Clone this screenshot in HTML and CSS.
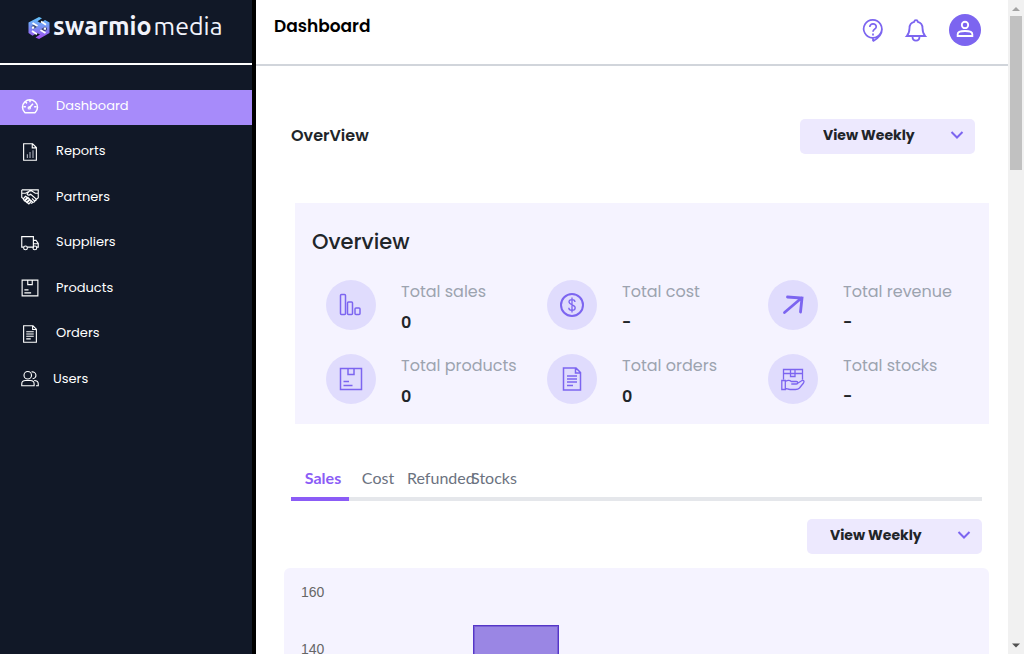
FILE: index.html
```html
<!DOCTYPE html>
<html lang="en">
<head>
<meta charset="utf-8">
<meta name="viewport" content="width=device-width, initial-scale=1">
<title>Dashboard</title>
<link rel="stylesheet" href="styles.css">
</head>
<body>
<svg class="defs" aria-hidden="true">
  <symbol id="i-box" viewBox="0 0 24 24"><path d="M1.500 1.500h21v21h-21zM9 1.500v6h6v-6M4.500 14.500h5.500M4.500 18.500h9"/></symbol>
  <symbol id="i-doc" viewBox="0 0 24 24"><path d="M3.500 1h12.500l4.500 4.500V23h-17zM15.500 1v5h5M7 9h10M7 12h10M7 15h10M7 18.500h6"/></symbol>
  <symbol id="i-chevron" viewBox="0 0 14 10"><path d="M1.500 2l5.500 5.500L12.500 2"/></symbol>
</svg>
<div class="app">
  <aside class="sidebar">
    <a class="logo" href="#">
      <svg class="logo-mark" viewBox="0 0 22 22" aria-hidden="true">
        <defs><linearGradient id="g" x1="0" y1="0" x2="0" y2="1"><stop offset="0" stop-color="#63c5fb"/><stop offset=".5" stop-color="#7b8cf5"/><stop offset="1" stop-color="#a34cf0"/></linearGradient></defs>
        <path fill="url(#g)" d="M11 0l3 1.300-4.500 3 3 1.700L17 3l4.500 2.500V16L11 22l-3.500-1.500 4.500-3-3-1.500-4.500 2.700L.5 16V5.500z"/>
        <path fill="#111827" d="M3.500 9l3-1.500 3 2-4.500 3zM12.500 12.500l4.500-3 2 1.500v2l-3 1.500z" opacity=".6"/>
        <path fill="none" stroke="#fff" stroke-width="1.800" d="M4.500 6l5 3M13 4.500l5 3.300M4 14l5 3.300M12.500 13l5 3"/>
        <path fill="#fff" d="M4 9.500h2.200v2.200H4zM15.800 10.500H18v2.200h-2.200z"/>
      </svg>
      <span class="logo-text"><b>swarmio</b><span>media</span></span>
    </a>
    <nav class="nav" aria-label="Main">
      <a class="nav-item active" href="#"><svg viewBox="0 0 24 24"><path stroke-width="2" d="M5 20.500a10 9.800 0 1 1 14 0 2 1 0 0 1-1.500.5h-11a2 1 0 0 1-1.500-.5zM11 14.500l5-5.500M12 4v3M6 6.500l2 2M3.500 13h3M17.500 13h3"/><circle cx="11" cy="14.500" r="1.500"/></svg><span>Dashboard</span></a>
      <a class="nav-item" href="#"><svg viewBox="0 0 24 24"><path d="M3.500 1h12l5 5v17h-17zM15 1v5.500h5.500"/><path class="dim" d="M8.500 20v-5M12 20v-8M16 20v-10.500"/></svg><span>Reports</span></a>
      <a class="nav-item" href="#"><svg viewBox="0 0 24 24"><path d="M1 2.500h22v10.500l-4 3.500M1 2.500v10l2.500 2M1 7h5l4.500-2.500M23 7h-4l-4.500-3h-3L8 8c1 2 3 2 5 .3l7 6.200c1 1.500-.5 3-2 2M14.500 14l3.500 3c.5 1.500-1 2.700-2.500 1.500L13 16.500M15.500 18.500c0 1.500-1.500 2-2.500 1.500"/><path stroke-width="1.700" d="M3 14.500l3-3.500 2.500 1.500-4 4.500zM5.500 17l4-4 2 2-4 4zM8.500 19.500l3.500-4 1.700 2-3.200 3.700z"/></svg><span>Partners</span></a>
      <a class="nav-item" href="#"><svg viewBox="0 0 24 24"><path d="M3.500 17.500H1v-14h15.500v14H8.500M16.500 8.500H20l3 4v5h-2M16.500 13H23"/><circle cx="6" cy="18.500" r="2.500"/><circle cx="18.500" cy="18.500" r="2.500"/></svg><span>Suppliers</span></a>
      <a class="nav-item" href="#"><svg><use href="#i-box"/></svg><span>Products</span></a>
      <a class="nav-item" href="#"><svg><use href="#i-doc"/></svg><span>Orders</span></a>
      <a class="nav-item users" href="#"><svg viewBox="0 0 24 24"><circle cx="9" cy="7" r="5"/><path d="M14 2.700a4.600 4.600 0 1 1 1.500 9M1 21v-2.500c0-3 2.500-4.500 5-4.500h6.500c2.500 0 5 1.500 5 4.500V21zM17.500 14c3 0 5.500 1.500 5.500 4.500V21h-3"/></svg><span>Users</span></a>
    </nav>
  </aside>

  <main class="main">
    <header class="topbar">
      <h1>Dashboard</h1>
      <div class="actions">
        <button class="icon-btn" type="button" aria-label="Help"><svg viewBox="0 0 24 24"><path stroke-width="1.700" d="M12 23.200v-3.400h-.5a9 9 0 1 1 .5 0M12 23.200c5-2.700 9-6.700 9-12.200M8.800 9c0-4.500 6.700-4 6.400 0-.2 2.200-3.200 2.300-3.200 4.800M12 15.400v2"/></svg></button>
        <button class="icon-btn" type="button" aria-label="Notifications"><svg viewBox="0 0 24 24"><path stroke-width="1.800" d="M2.800 18c2.700-3 2.700-5 2.700-8 0-3.500 2-5.500 4.700-6.200.2-2.200 3.400-2.200 3.600 0 2.700.7 4.700 2.700 4.700 6.200 0 3 0 5 2.700 8zM8.500 18.500c0 5.500 7 5.500 7 0"/></svg></button>
        <button class="avatar" type="button" aria-label="Account"><svg viewBox="0 0 24 24"><circle cx="12" cy="6.500" r="3.500"/><path d="M4 18.500v-2c0-4.500 16-4.500 16 0v2z"/></svg></button>
      </div>
    </header>

    <div class="content">
      <div class="section-head">
        <h2>OverView</h2>
        <div class="picker">
          <select aria-label="Overview period"><option>View Weekly</option><option>View Monthly</option></select>
          <svg><use href="#i-chevron"/></svg>
        </div>
      </div>

      <section class="panel">
        <h3>Overview</h3>
        <div class="stats">
          <div class="stat"><span class="badge"><svg viewBox="0 0 24 24"><rect x="1.500" y="1.500" width="5" height="20" rx="1"/><rect x="8.500" y="9" width="5" height="12.500" rx="1"/><rect x="16" y="15" width="5" height="6.500" rx="1"/></svg></span><div><p>Total sales</p><strong>0</strong></div></div>
          <div class="stat"><span class="badge"><svg viewBox="0 0 24 24"><circle cx="12" cy="12" r="11" stroke-width="2"/><path stroke-width="1.300" d="M15 9c0-3-6-3.300-6-.2 0 3.400 6.200 2.700 6.200 6 0 3.400-6.400 3.400-6.400 0M12 4.500v15"/></svg></span><div><p>Total cost</p><strong>-</strong></div></div>
          <div class="stat"><span class="badge"><svg viewBox="0 0 24 24"><path stroke-width="2.800" stroke-linecap="round" d="M3.500 19.500L20.500 5M6.500 4l14.500 1-1.500 14"/></svg></span><div><p>Total revenue</p><strong>-</strong></div></div>
          <div class="stat"><span class="badge"><svg><use href="#i-box"/></svg></span><div><p>Total products</p><strong>0</strong></div></div>
          <div class="stat"><span class="badge"><svg><use href="#i-doc"/></svg></span><div><p>Total orders</p><strong>0</strong></div></div>
          <div class="stat"><span class="badge"><svg class="fine" viewBox="0 0 24 24"><path d="M2.500 12.500v-10h19v10M2.500 6.500h19M9.500 2.500V9.500H14V2.500M.8 13.500h3.500v9H.8zM4.300 14.500c3-2 5-1 6 0h5c2 0 2 2.500 0 2.500h-5M15.500 17l5.500-3.500c2-.5 2.500 1 1.500 2.500L18.500 21c-1 1-2 1.500-4 1.500H9c-2 0-3-1-4.700-1"/></svg></span><div><p>Total stocks</p><strong>-</strong></div></div>
        </div>
      </section>

      <nav class="tabs" aria-label="Charts">
        <a class="tab active" href="#">Sales</a>
        <a class="tab" href="#">Cost</a>
        <a class="tab" href="#">Refunded</a>
        <a class="tab" href="#">Stocks</a>
      </nav>

      <div class="chart-head">
        <div class="picker">
          <select aria-label="Chart period"><option>View Weekly</option><option>View Monthly</option></select>
          <svg><use href="#i-chevron"/></svg>
        </div>
      </div>

      <section class="chart" aria-label="Sales chart">
        <div class="axis"><span>160</span><span>140</span></div>
        <div class="plot"><div class="bar"></div></div>
      </section>
    </div>
  </main>

  <div class="scrollbar" aria-hidden="true">
    <svg viewBox="0 0 16 16"><path fill="#a3a3a3" d="M4 11l4-4 4 4z"/></svg>
    <div class="thumb"></div>
    <svg viewBox="0 0 16 16"><path fill="#505050" d="M4 5.500h8l-4 4z"/></svg>
  </div>
</div>
</body>
</html>
```
FILE: styles.css
```css
* { box-sizing: border-box; }
body { margin: 0; font-family: Poppins, Inter, sans-serif; color: #212529; background: #fff; }
h1, h2, h3, p { margin: 0; }
a { color: inherit; text-decoration: none; }
button { border: 0; padding: 0; background: none; cursor: pointer; }
svg { fill: none; stroke: currentColor; stroke-width: 1.5; flex: none; }
.defs { position: absolute; width: 0; height: 0; }

.app { display: flex; height: 100vh; overflow: hidden; }

.sidebar { flex: none; width: 256px; background: #111827; border-right: 4px solid #000; color: #fff; }
.logo { display: flex; align-items: center; gap: 3px; height: 65px; padding: 0 0 8px 28px; border-bottom: 2px solid #fff; }
.logo-mark { width: 22px; height: 22px; stroke: none; }
.logo-text { display: flex; gap: 2px; padding-bottom: 3px; font-family: Ubuntu, "Noto Sans", sans-serif; font-size: 25px; line-height: 30px; color: #f1f3fb; }
.logo-text b { font-weight: 700; }
.nav { display: flex; flex-direction: column; justify-content: space-between; height: 308px; margin-top: 25px; }
.nav-item { display: flex; align-items: center; gap: 17px; height: 35px; padding: 0 0 3px 21px; font-size: 13px; line-height: 20px; }
.nav-item svg { width: 18px; height: 18px; }
.nav-item span { padding-bottom: 1px; }
.nav-item.active { background: #a78bfa; }
.nav-item.users { gap: 14px; }
.dim { stroke: #a9adb8; }

.main { flex: 1; min-width: 0; overflow: hidden; }
.topbar { display: flex; justify-content: space-between; align-items: center; height: 66px; padding: 0 27px 4px 18px; border-bottom: 2px solid #d1d5db; }
.topbar h1 { font-size: 17px; line-height: 28px; font-weight: 600; color: #000; padding-bottom: 8px; }
.actions { display: flex; align-items: center; gap: 19px; color: #7c65f0; }
.icon-btn { display: flex; color: inherit; }
.icon-btn svg { width: 24px; height: 24px; }
.avatar { display: grid; place-items: center; width: 32px; height: 32px; border-radius: 50%; background: #7c65f0; color: #fff; margin-left: 2px; }
.avatar svg { width: 22px; height: 22px; stroke-width: 2; }

.content { padding: 53px 19px 0 28px; }
.section-head { display: flex; justify-content: space-between; padding: 0 14px 0 7px; }
.section-head h2 { font-size: 16px; line-height: 33px; font-weight: 600; }
.picker { position: relative; width: 175px; height: 35px; }
.picker select { appearance: none; width: 100%; height: 100%; padding: 0 40px 3px 23px; border: 0; border-radius: 5px; background: #ede9fe; color: #212529; font: 700 14px/20px Poppins, Inter, sans-serif; }
.picker svg { position: absolute; right: 11px; top: 11px; width: 14px; height: 10px; color: #7c65f0; stroke-width: 2; pointer-events: none; }

.panel { margin: 49px 0 0 11px; padding: 23px 0 20px; background: #f5f3ff; }
.panel h3 { padding-left: 17px; font-size: 21px; line-height: 32px; font-weight: 500; }
.stats { display: grid; grid-template-columns: repeat(3, 1fr); row-gap: 24px; padding: 22px 0 0 31px; }
.stat { display: flex; gap: 25px; height: 50px; }
.badge { display: grid; place-items: center; width: 50px; height: 50px; border-radius: 50%; background: #e0dcfd; color: #7c65f0; }
.badge svg { width: 24px; height: 24px; }
.badge .fine { stroke-width: 1.3; }
.stat p { font-size: 16px; line-height: 24px; color: #9ca3af; white-space: nowrap; }
.stat strong { display: block; margin-top: 7px; font-size: 16px; line-height: 24px; font-weight: 600; }

.tabs { display: flex; height: 44px; margin: 33px 7px 0; border-bottom: 4px solid #e5e7eb; font: 400 16px/24px Lato, sans-serif; color: #6b7280; }
.tab { width: 58px; height: 44px; padding-top: 9px; text-align: center; white-space: nowrap; }
.tab.active { padding-left: 6px; border-bottom: 4px solid #8b5cf6; color: #8b5cf6; font-weight: 700; }
.chart-head { display: flex; justify-content: flex-end; padding: 18px 7px 14px 0; }

.chart { display: flex; height: 520px; padding: 14px 17px 40px; border-radius: 6px; background: #f5f3ff; }
.axis { display: flex; flex-direction: column; gap: 37px; width: 30px; font: 14px/20px "Liberation Sans", Arial, sans-serif; color: #666; }
.plot { display: flex; flex: 1; align-items: flex-end; padding-left: 142px; }
.bar { width: 86px; height: 423px; border: 1px solid #5536c8; border-bottom: 0; background: #9a86e4; box-shadow: inset 0 0 0 1px #7a61d6; }

.scrollbar { display: flex; flex-direction: column; flex: none; width: 16px; background: #f1f1f1; }
.scrollbar svg { width: 16px; height: 16px; stroke: none; }
.thumb { width: 12px; height: 154px; margin: 0 2px auto; background: #c1c1c1; }
```
